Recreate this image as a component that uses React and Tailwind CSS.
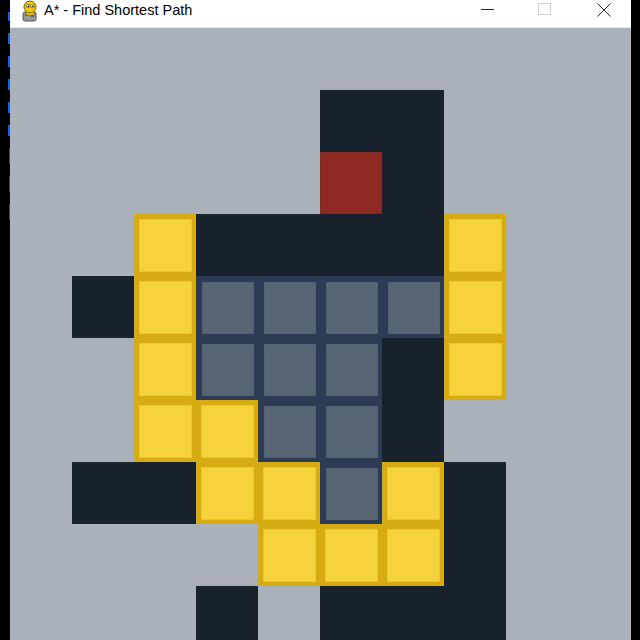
import React from "react";

const MAP = [
  "..........",
  ".....WW...",
  ".....RW...",
  "..YWWWWY..",
  ".WYCCCCY..",
  "..YCCCWY..",
  "..YYCCW...",
  ".WWYYCYW..",
  "....YYYW..",
  "...W.WWW..",
];

function Cell({ t }) {
  if (t === "W") return <div className="w-[62px] h-[62px] bg-[#17222c]" />;
  if (t === "R")
    return <div className="w-[62px] h-[62px] bg-[#8e2a23] border border-[#7c2a22]" />;
  if (t === "Y")
    return (
      <div className="w-[62px] h-[62px] bg-[#d6ac12] pl-[5px] pt-[5px]">
        <div className="w-[53px] h-[53px] bg-[#f6d33d] border border-[#ecc630]" />
      </div>
    );
  if (t === "C")
    return (
      <div className="w-[62px] h-[62px] bg-[#2e3b54] pl-[6px] pt-[6px]">
        <div className="w-[52px] h-[52px] bg-[#576574] border border-[#52606f]" />
      </div>
    );
  return <div className="w-[62px] h-[62px]" />;
}

function PygameIcon() {
  return (
    <svg width="18" height="23" viewBox="0 0 18 23">
      <rect x="2" y="12" width="13" height="9" rx="2" fill="#9a9a9a" stroke="#555" strokeWidth="1" />
      <rect x="4" y="14" width="3" height="2" fill="#d33" />
      <rect x="10" y="14" width="3" height="3" fill="#555" />
      <ellipse cx="9" cy="7" rx="6" ry="6" fill="#f5d000" stroke="#7a6200" strokeWidth="1" />
      <circle cx="7" cy="6" r="1.8" fill="#fff" stroke="#333" strokeWidth="0.6" />
      <circle cx="11.5" cy="6" r="1.8" fill="#fff" stroke="#333" strokeWidth="0.6" />
      <circle cx="7.3" cy="6.2" r="0.8" fill="#000" />
      <circle cx="11.8" cy="6.2" r="0.8" fill="#000" />
      <path d="M5 12 Q9 14 13 12 L13 15 L5 15 Z" fill="#f5d000" stroke="#7a6200" strokeWidth="0.6" />
    </svg>
  );
}

export default function App() {
  return (
    <div className="w-[640px] h-[640px] flex bg-black overflow-hidden" style={{ fontFamily: '"Liberation Sans", Arial, sans-serif' }}>
      <div className="w-[10px] h-full bg-black flex flex-col items-end pt-[12px] gap-[12px]">
        <div className="w-[2px] h-[9px] bg-[#1d5fd6]" />
        <div className="w-[2px] h-[11px] bg-[#1d5fd6]" />
        <div className="w-[2px] h-[11px] bg-[#1d5fd6]" />
        <div className="w-[2px] h-[11px] bg-[#1d5fd6]" />
        <div className="w-[2px] h-[11px] bg-[#1d5fd6]" />
        <div className="w-[2px] h-[11px] bg-[#1d5fd6]" />
        <div className="w-[1px] h-[16px] bg-[#1a4a9a]" />
        <div className="w-[1px] h-[16px] bg-[#1a4a9a]" />
        <div className="w-[1px] h-[16px] bg-[#1a4a9a]" />
      </div>
      <div className="w-[621px] h-full flex flex-col">
        <div className="h-[28px] bg-white border-b border-[#e6e8eb] flex items-center relative shrink-0">
          <div className="absolute left-[11px] top-0">
            <PygameIcon />
          </div>
          <div className="absolute left-[34px] top-[1px] text-[14.5px] text-black leading-[18px]">A* - Find Shortest Path</div>
          <div className="absolute left-[471px] top-[9px] w-[13px] h-[1px] bg-[#222]" />
          <div className="absolute left-[528px] top-[3px] w-[13px] h-[12px] border border-[#cfcfcf]" />
          <svg className="absolute left-[587px] top-[3px]" width="14" height="14" viewBox="0 0 14 14">
            <path d="M0.5 0.5 L13.5 13.5 M13.5 0.5 L0.5 13.5" stroke="#222" strokeWidth="1" />
          </svg>
        </div>
        <div className="flex-1 bg-[#aab1ba] overflow-hidden">
          <div className="grid grid-cols-[repeat(10,62px)]">
            {MAP.flatMap((row, r) =>
              row.split("").map((t, c) => <Cell key={r + "-" + c} t={t} />)
            )}
          </div>
        </div>
      </div>
      <div className="w-[9px] h-full bg-black" />
    </div>
  );
}
